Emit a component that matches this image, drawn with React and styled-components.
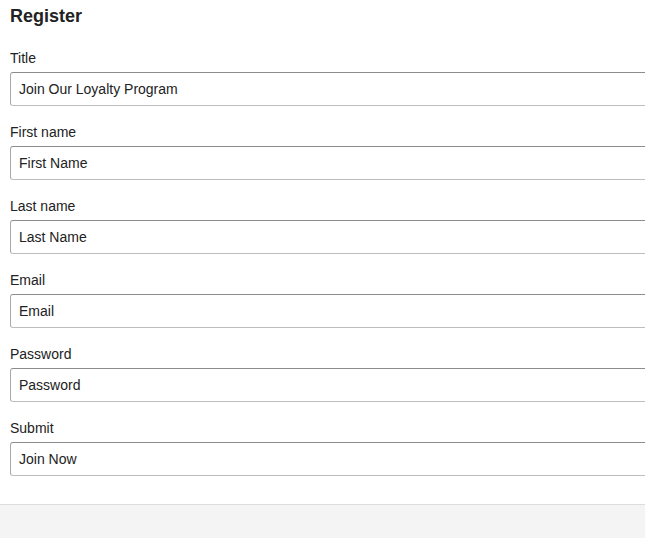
import styled, { createGlobalStyle } from "styled-components";

const GlobalStyle = createGlobalStyle`
  html, body {
    margin: 0;
    padding: 0;
    background: #f4f4f4;
  }
  body {
    font-family: "Liberation Sans", Arial, sans-serif;
    color: #222;
  }
`;

const Panel = styled.div`
  background: #fff;
  padding: 4px 0 28px 10px;
  border-bottom: 1px solid #dcdcdc;
  box-shadow: 0 1px 1px rgba(0, 0, 0, 0.04);
`;

const Heading = styled.h2`
  margin: 0 0 19px;
  font-size: 18px;
  line-height: 24px;
  font-weight: 700;
  color: #222;
`;

const Form = styled.form`
  display: flex;
  flex-direction: column;
  gap: 15px;
`;

const Field = styled.div`
  display: flex;
  flex-direction: column;
  gap: 4px;
`;

const Label = styled.label`
  padding-top: 1px;
  font-size: 14px;
  line-height: 20px;
  color: #222;
`;

const Input = styled.input`
  box-sizing: border-box;
  width: 100%;
  height: 34px;
  padding: 0 8px;
  font-family: inherit;
  font-size: 14px;
  color: #222;
  background: #fff;
  border: 1px solid #a9a9a9;
  border-top-color: #8c8c8c;
  border-bottom-color: #bdbdbd;
  border-right: none;
  border-radius: 3px 0 0 3px;
  outline: none;
  &::placeholder {
    color: #222;
    opacity: 1;
  }
`;

const fields = [
  { id: "title", label: "Title", value: "Join Our Loyalty Program" },
  { id: "first", label: "First name", value: "First Name" },
  { id: "last", label: "Last name", value: "Last Name" },
  { id: "email", label: "Email", value: "Email" },
  { id: "password", label: "Password", value: "Password" },
  { id: "submit", label: "Submit", value: "Join Now" },
];

export default function App() {
  return (
    <>
      <GlobalStyle />
      <Panel>
        <Heading>Register</Heading>
        <Form onSubmit={(e) => e.preventDefault()}>
          {fields.map((f) => (
            <Field key={f.id}>
              <Label htmlFor={f.id}>{f.label}</Label>
              <Input id={f.id} type="text" defaultValue={f.value} />
            </Field>
          ))}
        </Form>
      </Panel>
    </>
  );
}
